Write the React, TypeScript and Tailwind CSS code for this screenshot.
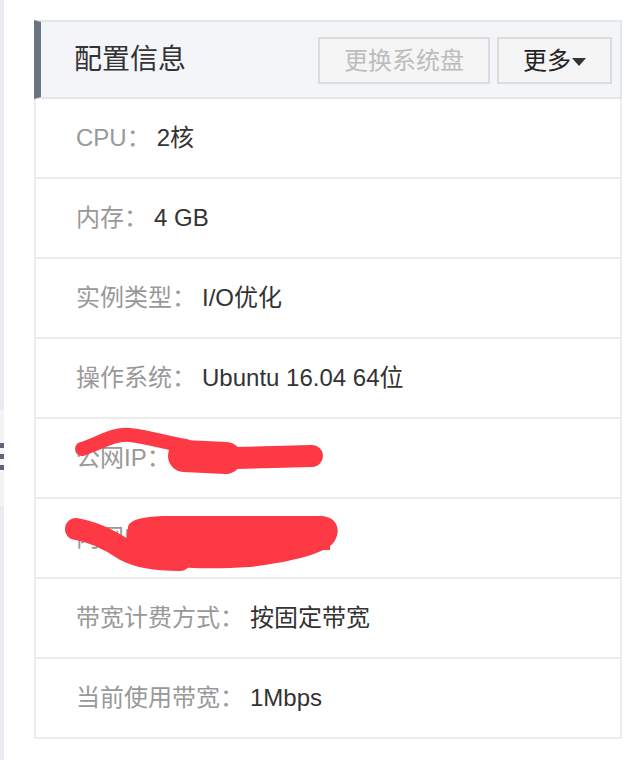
import React from 'react';

const rows = [
  { label: 'CPU：', value: '2核' },
  { label: '内存：', value: '4 GB' },
  { label: '实例类型：', value: 'I/O优化' },
  { label: '操作系统：', value: 'Ubuntu 16.04 64位' },
  { label: '公网IP：', value: '' },
  { label: '内网IP：', value: '' },
  { label: '带宽计费方式：', value: '按固定带宽' },
  { label: '当前使用带宽：', value: '1Mbps' },
];

export default function App() {
  return (
    <div
      className="relative flex h-[760px] w-[640px] overflow-hidden bg-white"
      style={{ fontFamily: '"Liberation Sans", "Noto Sans CJK SC", sans-serif' }}
    >
      {/* side nav sliver */}
      <div className="flex w-[4px] flex-col">
        <div className="h-[410px] bg-[#e9edf3]" />
        <div className="flex h-[95px] flex-col gap-[6px] bg-[#f4f4f5] pt-[33px]">
          <div className="h-[5px] bg-[#5b6677]" />
          <div className="h-[5px] bg-[#5b6677]" />
          <div className="h-[5px] bg-[#5b6677]" />
        </div>
        <div className="flex-1 bg-[#e9edf3]" />
      </div>

      <div className="pl-[30px] pt-[20px]">
        <div className="w-[588px]">
          {/* header */}
          <div className="flex h-[79px] items-center justify-between border-2 border-l-[7px] border-[#e2e5ea] border-l-[#6b7582] bg-[#f3f5f9] pl-[33px] pr-[8px]">
            <h2 className="text-[28px] text-[#333]">配置信息</h2>
            <div className="flex gap-[7px] pt-[2px]">
              <button className="h-[47px] w-[172px] border-2 border-[#dcdcdc] bg-[#f5f5f5] text-[24px] text-[#bdbdbd]">
                更换系统盘
              </button>
              <button className="flex h-[47px] w-[115px] items-center justify-center gap-[1px] border-2 border-[#dcdcdc] bg-[#f5f5f5] text-[24px] text-[#222]">
                更多
                <svg width="14" height="8" viewBox="0 0 14 8" className="mt-[2px]">
                  <polygon points="0,0 14,0 7,8" fill="#333" />
                </svg>
              </button>
            </div>
          </div>

          {/* rows */}
          <div className="border-x-2 border-b-2 border-[#ececec]">
            {rows.map((r, i) => (
              <div
                key={i}
                className={`flex items-center pl-[40px] text-[24px] ${
                  i < rows.length - 1 ? 'h-[80px] border-b-2 border-[#ececec]' : 'h-[78px]'
                }`}
              >
                <span className="text-[#999]">{r.label}</span>
                <span className="ml-[6px] text-[#333]">{r.value}</span>
              </div>
            ))}
          </div>
        </div>
      </div>

      {/* red redaction marks */}
      <svg
        className="pointer-events-none absolute left-0 top-0"
        width="640"
        height="760"
        viewBox="0 0 640 760"
      >
        <g stroke="#fd3946" fill="none" strokeLinecap="round" strokeLinejoin="round">
          <path d="M82 449 C100 443 115 433 130 435 C150 437 165 443 186 446" strokeWidth="14" />
          <path d="M184 456 L226 458" strokeWidth="32" />
          <path d="M236 458 L312 456" strokeWidth="22" />
          <path d="M76 529 C95 532 110 540 125 550 C140 558 160 560 180 560" strokeWidth="22" />
        </g>
        <path
          d="M128 528 C128 518 150 516 170 516 L320 516 C337 516 342 530 334 542 C325 554 290 562 250 567 C200 570 160 568 136 558 C125 550 126 536 128 528 Z"
          fill="#fd3946"
        />
        <rect x="318" y="538" width="12" height="12" fill="#fd3946" />
      </svg>
    </div>
  );
}
